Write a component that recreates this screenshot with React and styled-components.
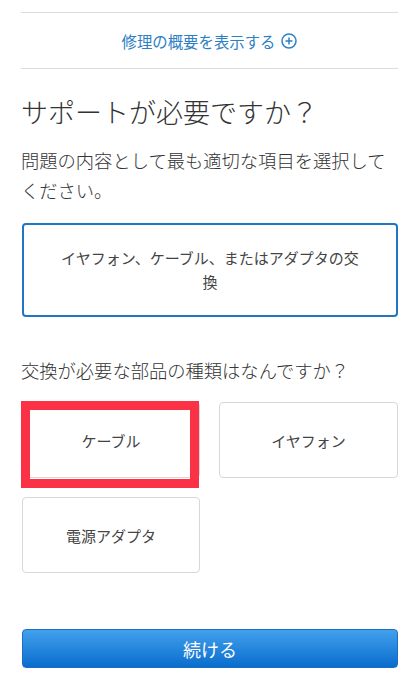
import React from "react";
import styled, { createGlobalStyle } from "styled-components";

const Global = createGlobalStyle`
  html, body { margin: 0; padding: 0; background: #fff; }
  body { font-family: "Noto Sans CJK JP", "Noto Sans", sans-serif; color: #333; }
  * { box-sizing: border-box; }
`;

const Page = styled.div`
  padding: 12px 21px 30px 22px;
  width: 419px;
`;

const SummaryBar = styled.div`
  border-top: 1px solid #dcdcdc;
  border-bottom: 1px solid #dcdcdc;
  height: 57px;
  display: flex;
  align-items: center;
  justify-content: center;
  gap: 6px;
  color: #2f7fc4;
  font-size: 15.4px;
  margin-left: -1px;
`;

const Heading = styled.h1`
  margin: 26px 0 0 -1px;
  font-size: 27px;
  font-weight: 300;
  line-height: 34px;
  color: #333;
`;

const Lead = styled.p`
  margin: 16px 0 0 -1px;
  font-size: 18.3px;
  font-weight: 300;
  line-height: 30px;
  color: #333;
`;

const SelectedBox = styled.div`
  margin-top: 18px;
  min-height: 94px;
  border: 2px solid #2176c4;
  border-radius: 4px;
  display: flex;
  align-items: center;
  justify-content: center;
  text-align: center;
  padding: 0 30px;
  font-size: 15px;
  line-height: 24px;
  color: #444;
`;

const Question = styled.h2`
  margin: 38px 0 0 -1px;
  font-size: 18.3px;
  font-weight: 300;
  line-height: 30px;
  color: #333;
`;

const Grid = styled.div`
  margin-top: 17px;
  display: grid;
  grid-template-columns: 178px 179px;
  column-gap: 19px;
  row-gap: 19px;
`;

const Card = styled.div`
  position: relative;
  height: 76px;
  border: 1px solid #d8d8d8;
  border-radius: 4px;
  display: flex;
  align-items: center;
  justify-content: center;
  font-size: 15px;
  color: #444;
`;

const Highlight = styled.div`
  position: absolute;
  top: -2px;
  left: -2px;
  width: 178px;
  height: 87px;
  border: 9px solid #fb3146;
  pointer-events: none;
`;

const Button = styled.button`
  margin-top: 56px;
  width: 100%;
  height: 39px;
  border: 1px solid #1a6fc4;
  border-radius: 4px;
  background: linear-gradient(#42a0ec, #0a6dcd);
  color: #fff;
  font-family: "Noto Sans CJK JP", "Noto Sans", sans-serif;
  font-size: 18px;
  display: flex;
  align-items: center;
  justify-content: center;
`;

const PlusIcon = () => (
  <svg width="16" height="16" viewBox="0 0 16 16" fill="none" stroke="#2f7fc4" strokeWidth="1.5">
    <circle cx="8" cy="8" r="7" />
    <path d="M8 4.5v7M4.5 8h7" />
  </svg>
);

export default function App() {
  return (
    <Page>
      <Global />
      <SummaryBar>
        <span>修理の概要を表示する</span>
        <PlusIcon />
      </SummaryBar>
      <Heading>サポートが必要ですか？</Heading>
      <Lead>問題の内容として最も適切な項目を選択してください。</Lead>
      <SelectedBox>イヤフォン、ケーブル、またはアダプタの交換</SelectedBox>
      <Question>交換が必要な部品の種類はなんですか？</Question>
      <Grid>
        <Card>
          ケーブル
          <Highlight />
        </Card>
        <Card>イヤフォン</Card>
        <Card>電源アダプタ</Card>
      </Grid>
      <Button>続ける</Button>
    </Page>
  );
}
